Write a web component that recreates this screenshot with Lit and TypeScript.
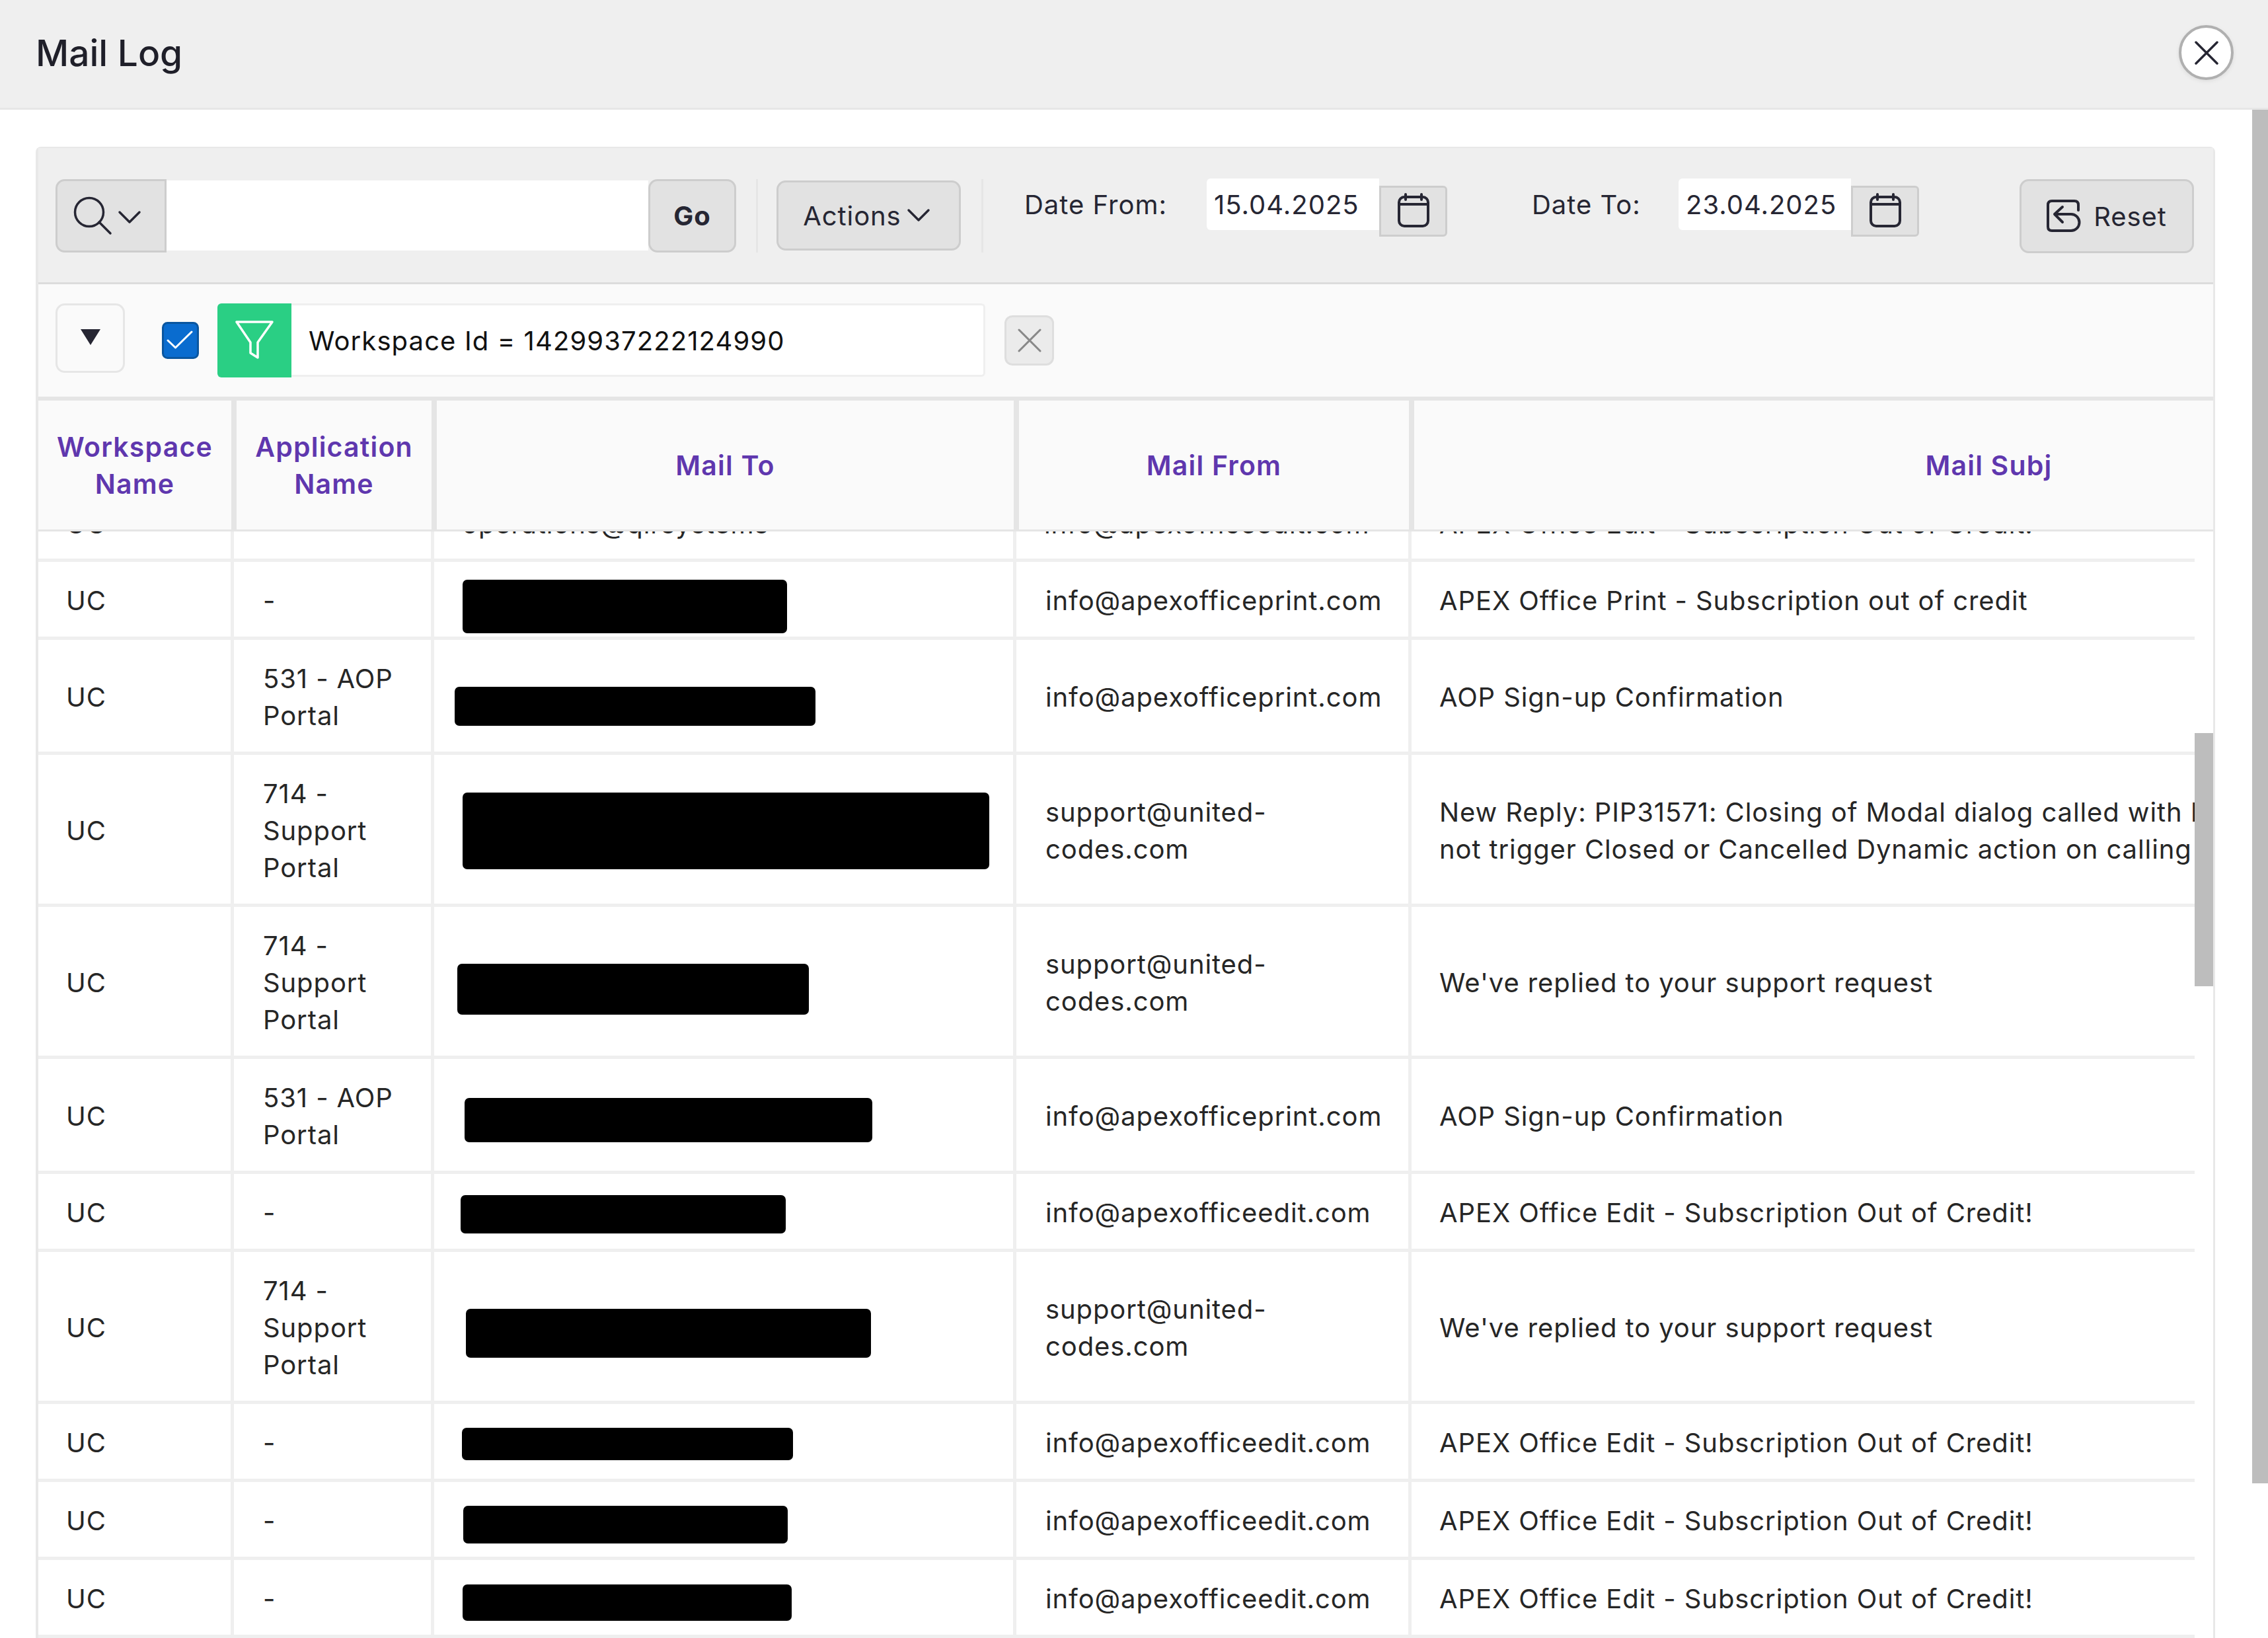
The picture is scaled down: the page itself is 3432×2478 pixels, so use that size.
import { LitElement, html, css, svg } from "lit";
import { customElement } from "lit/decorators.js";

interface Row {
  app: string;
  from: string;
  subj: string[];
  box: [number, number, number, number];
}

const SUPPORT = "714 - Support Portal";
const AOP = "531 - AOP Portal";
const INFO_PRINT = "info@apexofficeprint.com";
const INFO_EDIT = "info@apexofficeedit.com";
const SUPPORT_MAIL = "support@united-codes.com";
const CREDIT = "APEX Office Edit - Subscription Out of Credit!";
const REPLIED = "We've replied to your support request";
const SIGNUP = "AOP Sign-up Confirmation";

const rows: Row[] = [
  { app: "-", from: INFO_PRINT, subj: ["APEX Office Print - Subscription out of credit"], box: [642, 27, 491, 81] },
  { app: AOP, from: INFO_PRINT, subj: [SIGNUP], box: [630, 71, 546, 59] },
  {
    app: SUPPORT,
    from: SUPPORT_MAIL,
    subj: [
      "New Reply: PIP31571: Closing of Modal dialog called with I",
      "not trigger Closed or Cancelled Dynamic action on calling",
    ],
    box: [642, 57, 797, 116],
  },
  { app: SUPPORT, from: SUPPORT_MAIL, subj: [REPLIED], box: [634, 86, 532, 77] },
  { app: AOP, from: INFO_PRINT, subj: [SIGNUP], box: [645, 59, 617, 67] },
  { app: "-", from: INFO_EDIT, subj: [CREDIT], box: [639, 32, 492, 58] },
  { app: SUPPORT, from: SUPPORT_MAIL, subj: [REPLIED], box: [647, 86, 613, 74] },
  { app: "-", from: INFO_EDIT, subj: [CREDIT], box: [641, 36, 501, 49] },
  { app: "-", from: INFO_EDIT, subj: [CREDIT], box: [643, 36, 491, 57] },
  { app: "-", from: INFO_EDIT, subj: [CREDIT], box: [642, 37, 498, 55] },
];

const calendarIcon = svg`<svg class="ic" width="56" height="56" viewBox="0 0 56 56" fill="none" stroke="#262633" stroke-width="4" stroke-linecap="round">
  <rect x="6" y="6" width="44" height="44" rx="8"/><path d="M6 17H50M16 2V10M40 2V10"/></svg>`;

@customElement("app-root")
export class AppRoot extends LitElement {
  static styles = css`
    :host {
      display: block;
      position: relative;
      width: 3432px;
      height: 2478px;
      overflow: hidden;
      background: #fff;
      font-family: Inter, "Liberation Sans", sans-serif;
      font-size: 40px;
      letter-spacing: 0.9px;
      color: #262626;
    }
    * { box-sizing: border-box; }
    svg { display: block; }

    .head {
      height: 166px;
      background: #efefef;
      border-bottom: 3px solid #e6e6e6;
      display: flex;
      align-items: center;
      justify-content: space-between;
      padding: 0 52px 4px 54px;
    }
    .title { font-size: 55px; font-weight: 500; color: #1f1f29; letter-spacing: 0; }
    .close {
      width: 83px;
      height: 83px;
      border-radius: 50%;
      background: #fff;
      border: 4px solid #b0b0b0;
      display: flex;
      align-items: center;
      justify-content: center;
      box-shadow: 0 2px 6px rgba(0, 0, 0, 0.08);
    }

    .outer-bar {
      position: absolute;
      right: 0;
      top: 166px;
      width: 24px;
      height: 2078px;
      background: #bdbdbd;
    }

    .main { padding: 56px 80px 0 54px; }
    .panel {
      border: 3px solid #e8e8e8;
      border-left-width: 4px;
      border-bottom: none;
      border-top-width: 2px;
      border-radius: 8px 8px 0 0;
      position: relative;
    }

    .toolbar {
      height: 206px;
      background: #efefef;
      border-bottom: 3px solid #dcdcdc;
      display: flex;
      align-items: flex-start;
      padding: 47px 29px 0 26px;
      color: #262633;
    }
    .btn {
      background: #e2e2e2;
      border: 3px solid #cdcdcd;
      display: flex;
      align-items: center;
      justify-content: center;
      border-radius: 14px;
      height: 111px;
      flex: none;
    }
    .search-btn { width: 168px; border-radius: 14px 0 0 14px; }
    .search-input { width: 729px; height: 106px; margin-top: 2px; background: #fff; }
    .go { width: 133px; font-weight: 700; }
    .sep { width: 3px; height: 111px; background: #e6e6e6; flex: none; }
    .sep1 { margin: 0 28px 0 30px; }
    .actions { width: 279px; height: 106px; margin-top: 2px; gap: 8px; padding-right: 6px; }
    .sep2 { margin-left: 31px; }
    .label { line-height: 78px; margin-top: 0; flex: none; letter-spacing: 1px; }
    .label1 { margin-left: 62px; width: 276px; }
    .label2 { margin-left: 128px; width: 222px; }
    .date {
      width: 261px;
      height: 78px;
      line-height: 80px;
      margin-top: -1px;
      background: #fff;
      border-radius: 6px 0 0 6px;
      padding-left: 11px;
      flex: none;
      letter-spacing: 1px;
    }
    .cal { width: 103px; height: 77px; margin-top: 10px; border-radius: 0 6px 6px 0; }
    .reset { width: 264px; height: 112px; margin-left: auto; gap: 19px; }

    .filterbar {
      height: 176px;
      background: #fafafa;
      border-bottom: 6px solid #e5e5e5;
      display: flex;
      align-items: flex-start;
      padding: 29px 0 0 26px;
    }
    .collapse {
      width: 105px;
      height: 105px;
      border: 3px solid #e6e6e6;
      border-radius: 14px;
      background: #fafafa;
      display: flex;
      align-items: center;
      justify-content: center;
      padding-bottom: 4px;
      flex: none;
    }
    .check {
      width: 56px;
      height: 56px;
      margin: 28px 28px 0 56px;
      flex: none;
    }
    .funnel {
      width: 112px;
      height: 112px;
      background: #2acf84;
      border-radius: 6px 0 0 6px;
      flex: none;
    }
    .filter-text {
      width: 1050px;
      height: 111px;
      background: #fff;
      border: 3px solid #efefef;
      border-left: none;
      border-radius: 0 6px 6px 0;
      display: flex;
      align-items: center;
      padding: 2px 0 0 26px;
      color: #111;
      letter-spacing: 1.1px;
      flex: none;
    }
    .remove {
      width: 75px;
      height: 76px;
      margin: 18px 0 0 29px;
      background: #ebebeb;
      border: 3px solid #dedede;
      border-radius: 12px;
      display: flex;
      align-items: center;
      justify-content: center;
    }

    .thead {
      display: grid;
      grid-template-columns: 300px 303px 881px 598px 1fr;
      background: #e5e5e5;
      border-bottom: 3px solid #e5e5e5;
    }
    .th {
      height: 195px;
      background: #fafafa;
      color: #5f37ae;
      font-weight: 600;
      font-size: 41px;
      letter-spacing: 1.2px;
      line-height: 56px;
      display: flex;
      align-items: center;
      justify-content: center;
      text-align: center;
      border-right: 8px solid #e5e5e5;
    }
    .th:nth-child(5) { border-right: none; padding-left: 530px; }

    .tbody {
      position: relative;
      width: 3291px;
      height: 1674px;
      overflow: hidden;
    }
    .row {
      position: relative;
      width: 3263px;
      display: grid;
      grid-template-columns: 296px 303px 881px 598px 1185px;
      line-height: 56px;
    }
    .td {
      display: flex;
      align-items: center;
      padding: 31px 42px 26px;
      border-right: 5px solid #efefef;
      border-bottom: 5px solid #efefef;
      overflow: hidden;
      min-width: 0;
    }
    .td:nth-child(2) { padding-left: 44px; padding-right: 30px; }
    .td:nth-child(5) { border-right: none; padding-right: 0; }
    .lines { white-space: nowrap; }
    .td.from { padding-left: 44px; padding-right: 28px; }
    .from-text { width: 100%; }

    .clipped .td {
      height: 46px;
      padding-top: 0;
      padding-bottom: 0;
      align-items: flex-start;
    }
    .clipped span { display: block; margin-top: -39px; white-space: nowrap; }

    .redact {
      position: absolute;
      background: #000;
      border-radius: 7px;
    }
    .thumb {
      position: absolute;
      left: 3263px;
      top: 305px;
      width: 28px;
      height: 383px;
      background: #bdbdbd;
    }
  `;

  private renderRow(r: Row) {
    const [x, y, w, h] = r.box;
    return html`<div class="row">
      <div class="td">UC</div>
      <div class="td"><span>${r.app}</span></div>
      <div class="td"></div>
      <div class="td from"><span class="from-text">${r.from}</span></div>
      <div class="td">
        <div class="lines">${r.subj.map((l) => html`<div>${l}</div>`)}</div>
      </div>
      <div class="redact" style="left:${x}px;top:${y}px;width:${w}px;height:${h}px"></div>
    </div>`;
  }

  render() {
    return html`
      <div class="head">
        <div class="title">Mail Log</div>
        <div class="close">
          <svg width="36" height="36" viewBox="0 0 36 36" fill="none" stroke="#262633" stroke-width="3.5" stroke-linecap="round"><path d="M2 2L34 34M34 2L2 34"/></svg>
        </div>
      </div>
      <div class="main">
        <div class="panel">
          <div class="toolbar">
            <div class="btn search-btn">
              <svg width="162" height="105" viewBox="0 0 162 105" fill="none" stroke="#262633" stroke-width="3.5" stroke-linecap="round" stroke-linejoin="round">
                <circle cx="48" cy="47" r="21.5"/><path d="M63 62L80 79M94 47L109 62L124 47"/>
              </svg>
            </div>
            <div class="search-input"></div>
            <div class="btn go">Go</div>
            <div class="sep sep1"></div>
            <div class="btn actions">
              <span>Actions</span>
              <svg width="36" height="22" viewBox="0 0 36 22" fill="none" stroke="#262633" stroke-width="3.5" stroke-linecap="round" stroke-linejoin="round"><path d="M3 3L18 18L33 3"/></svg>
            </div>
            <div class="sep sep2"></div>
            <div class="label label1">Date From:</div>
            <div class="date">15.04.2025</div>
            <div class="btn cal">${calendarIcon}</div>
            <div class="label label2">Date To:</div>
            <div class="date">23.04.2025</div>
            <div class="btn cal">${calendarIcon}</div>
            <div class="btn reset">
              <svg width="52" height="50" viewBox="0 0 52 50" fill="none" stroke="#262633" stroke-width="4" stroke-linecap="round" stroke-linejoin="round">
                <path d="M48 16V8Q48 2 42 2H8Q2 2 2 8V41Q2 47 8 47H37A12.5 12.5 0 0 0 37 22H12M24 11L12 22L24 34"/>
              </svg>
              <span>Reset</span>
            </div>
          </div>
          <div class="filterbar">
            <div class="collapse">
              <svg width="30" height="24" viewBox="0 0 30 24"><path d="M0 0H30L15 24Z" fill="#262633"/></svg>
            </div>
            <div class="check">
              <svg width="56" height="56" viewBox="0 0 56 56">
                <rect x="1.5" y="1.5" width="53" height="53" rx="7" fill="#0a6ccf" stroke="#0a569f" stroke-width="3"/>
                <path d="M9 28L20.5 39L45 15" fill="none" stroke="#fff" stroke-width="3" stroke-linecap="round" stroke-linejoin="round"/>
              </svg>
            </div>
            <div class="funnel">
              <svg width="112" height="112" viewBox="0 0 112 112" fill="none" stroke="#fff" stroke-width="3.5" stroke-linejoin="round">
                <path d="M29 28H83L61 59V82L50 75V59Z"/>
              </svg>
            </div>
            <div class="filter-text">Workspace Id = 1429937222124990</div>
            <div class="remove">
              <svg width="38" height="38" viewBox="0 0 38 38" fill="none" stroke="#888" stroke-width="3" stroke-linecap="round"><path d="M3 3L35 35M35 3L3 35"/></svg>
            </div>
          </div>
          <div class="thead">
            <div class="th">Workspace<br />Name</div>
            <div class="th">Application<br />Name</div>
            <div class="th">Mail To</div>
            <div class="th">Mail From</div>
            <div class="th">Mail Subj</div>
          </div>
          <div class="tbody">
            <div class="row clipped">
              <div class="td"><span>UC</span></div>
              <div class="td"></div>
              <div class="td"><span>operations@qlrsystems</span></div>
              <div class="td"><span>${INFO_EDIT}</span></div>
              <div class="td"><span>${CREDIT}</span></div>
            </div>
            ${rows.map((r) => this.renderRow(r))}
            <div class="thumb"></div>
          </div>
        </div>
      </div>
      <div class="outer-bar"></div>
    `;
  }
}
